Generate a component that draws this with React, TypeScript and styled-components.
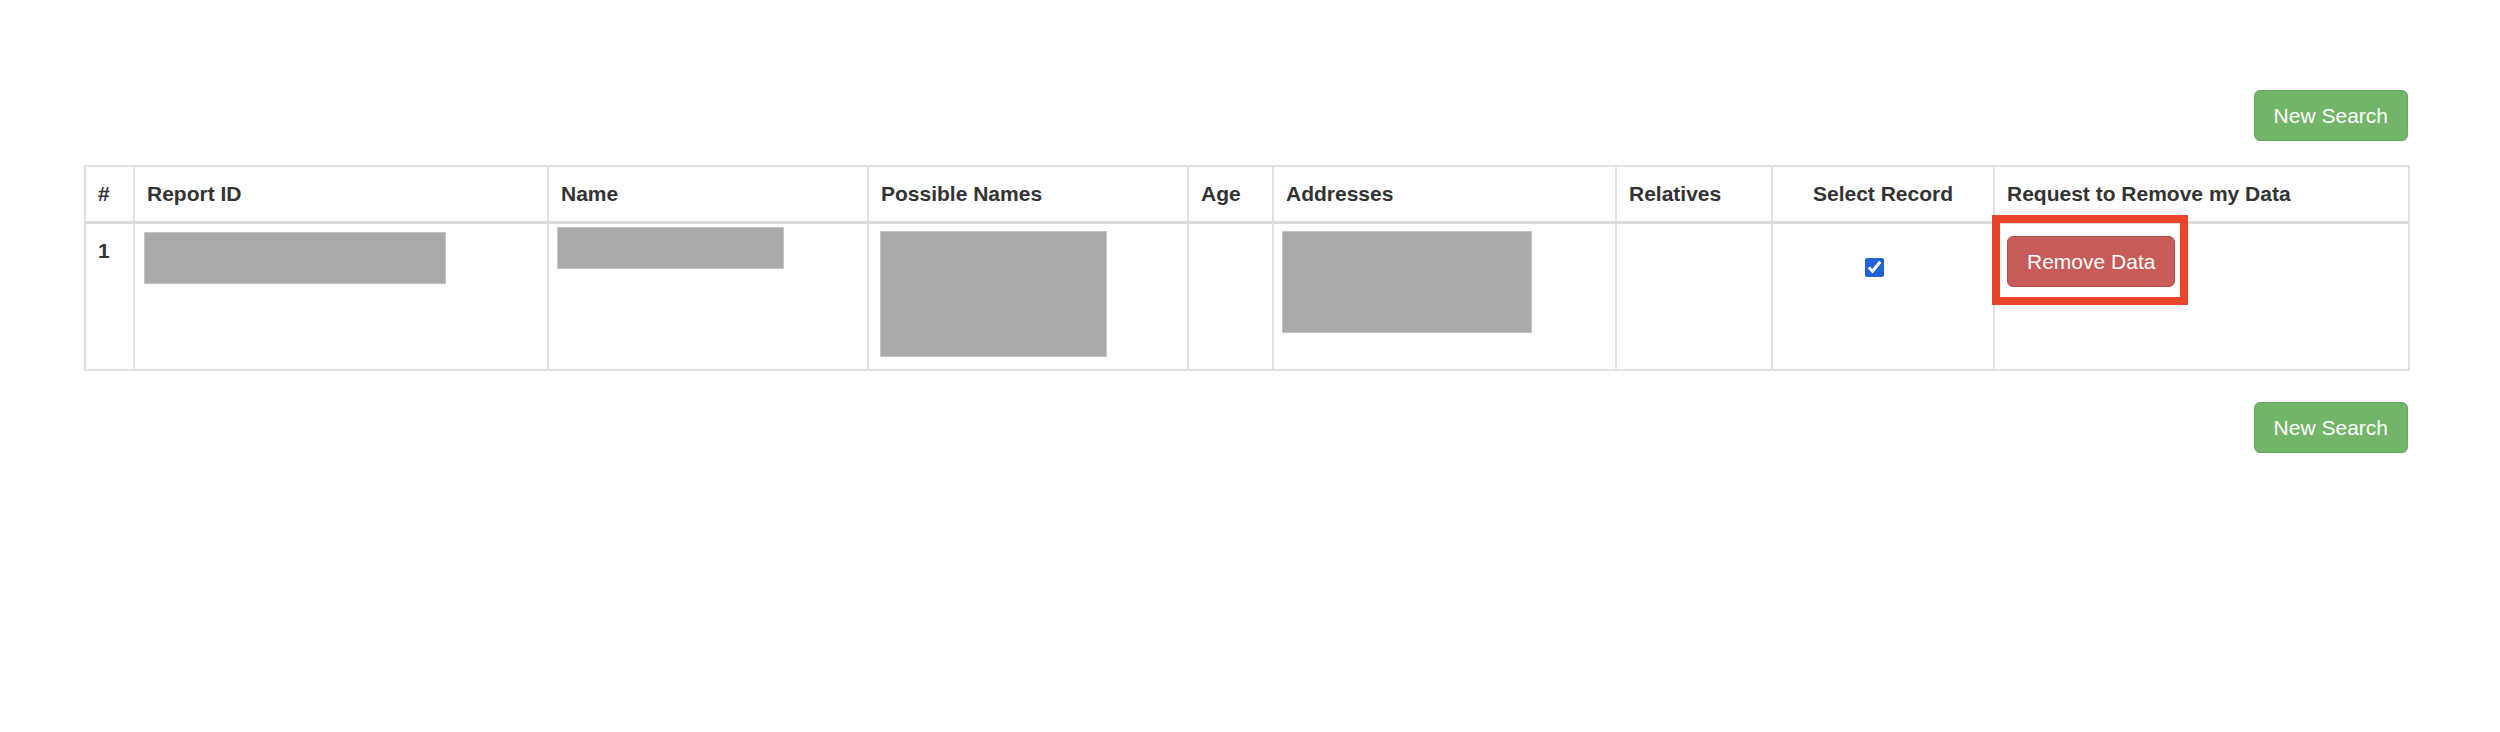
import React from "react";
import styled, { createGlobalStyle } from "styled-components";

const GlobalStyle = createGlobalStyle`
  body {
    margin: 0;
    background: #fff;
    color: #333;
    font-family: "Liberation Sans", Arial, Helvetica, sans-serif;
  }
`;

type Column = { title: string; width: number; center?: boolean };

const columns: Column[] = [
  { title: "#", width: 49 },
  { title: "Report ID", width: 414 },
  { title: "Name", width: 320 },
  { title: "Possible Names", width: 320 },
  { title: "Age", width: 85 },
  { title: "Addresses", width: 343 },
  { title: "Relatives", width: 156 },
  { title: "Select Record", width: 222, center: true },
  { title: "Request to Remove my Data", width: 415 },
];

const App = () => {
  return (
    <>
      <GlobalStyle />
      <StPage>
        <StButtonRow>
          <StButton $variant="success">New Search</StButton>
        </StButtonRow>
        <StTable>
          <colgroup>
            {columns.map((col) => (
              <col key={col.title} style={{ width: col.width }} />
            ))}
          </colgroup>
          <thead>
            <tr>
              {columns.map((col) => (
                <StTh key={col.title} $center={col.center}>
                  {col.title}
                </StTh>
              ))}
            </tr>
          </thead>
          <tbody>
            <StRow>
              <StTd>
                <strong>1</strong>
              </StTd>
              <StTd>
                <StRedacted $w={302} $h={52} $dx={-3} $dy={-4} />
              </StTd>
              <StTd>
                <StRedacted $w={227} $h={42} $dx={-4} $dy={-9} />
              </StTd>
              <StTd>
                <StRedacted $w={227} $h={126} $dx={-1} $dy={-5} />
              </StTd>
              <StTd />
              <StTd>
                <StRedacted $w={250} $h={102} $dx={-4} $dy={-5} />
              </StTd>
              <StTd />
              <StTd $center>
                <StCheckbox type="checkbox" defaultChecked />
              </StTd>
              <StTd>
                <StHighlightWrap>
                  <StButton $variant="danger">Remove Data</StButton>
                  <StHighlight />
                </StHighlightWrap>
              </StTd>
            </StRow>
          </tbody>
        </StTable>
        <StButtonRow>
          <StButton $variant="success">New Search</StButton>
        </StButtonRow>
      </StPage>
    </>
  );
};

export default App;

const StPage = styled.div`
  width: 2324px;
  padding: 90px 0 0 84px;
`;

const StButtonRow = styled.div`
  display: flex;
  justify-content: flex-end;
  margin-bottom: 24px;
`;

const StButton = styled.button<{ $variant: "success" | "danger" }>`
  box-sizing: border-box;
  height: 51px;
  padding: 0 19px;
  border-radius: 6px;
  border: 1px solid ${(p) => (p.$variant === "success" ? "#62ab5b" : "#b9504b")};
  background: ${(p) => (p.$variant === "success" ? "#71b569" : "#c75b57")};
  color: #fff;
  font-family: "Liberation Sans", Arial, sans-serif;
  font-size: 21px;
  line-height: 30px;
  cursor: pointer;
`;

const StTable = styled.table`
  width: 100%;
  table-layout: fixed;
  border-collapse: collapse;
  border: 2px solid #e1e1e1;
  margin-bottom: 31px;
  font-size: 21px;
  line-height: 30px;
`;

const StTh = styled.th<{ $center?: boolean }>`
  padding: 12px;
  text-align: ${(p) => (p.$center ? "center" : "left")};
  font-weight: bold;
  border: 2px solid #e1e1e1;
  border-bottom: 3px solid #dcdcdc;
  white-space: nowrap;
`;

const StRow = styled.tr`
  height: 147px;
`;

const StTd = styled.td<{ $center?: boolean }>`
  padding: 12px;
  vertical-align: top;
  text-align: ${(p) => (p.$center ? "center" : "left")};
  border: 2px solid #e1e1e1;
`;

const StRedacted = styled.div<{ $w: number; $h: number; $dx: number; $dy: number }>`
  box-sizing: border-box;
  width: ${(p) => p.$w}px;
  height: ${(p) => p.$h}px;
  margin-left: ${(p) => p.$dx}px;
  margin-top: ${(p) => p.$dy}px;
  background: #aaaaaa;
  border: 1px solid #c4c4c4;
`;

const StCheckbox = styled.input`
  display: inline-block;
  width: 19px;
  height: 19px;
  margin: 22px 18px 0 0;
  vertical-align: top;
  accent-color: #1f63d6;
`;

const StHighlightWrap = styled.span`
  position: relative;
  display: inline-block;
`;

const StHighlight = styled.span`
  position: absolute;
  left: -15px;
  top: -21px;
  width: 196px;
  height: 90px;
  box-sizing: border-box;
  border: 8px solid #e8432b;
  pointer-events: none;
`;
